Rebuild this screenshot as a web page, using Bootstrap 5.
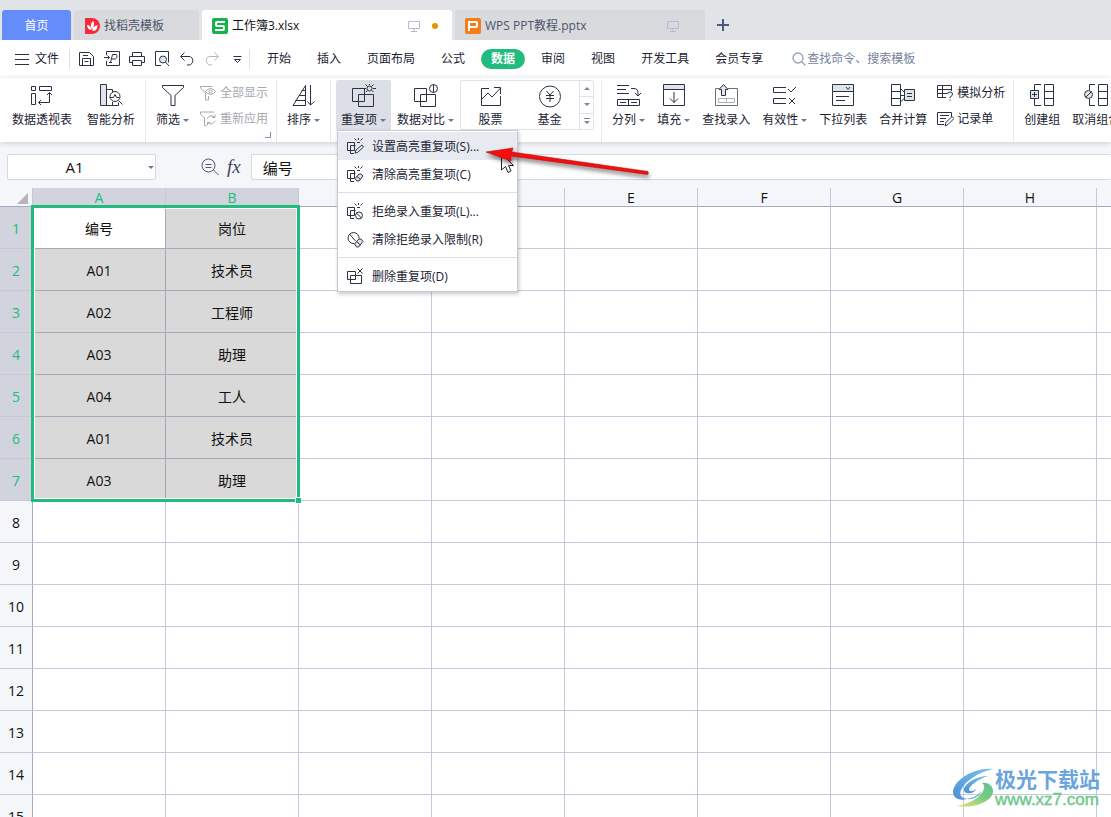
<!DOCTYPE html>
<html lang="zh-CN">
<head>
<meta charset="utf-8">
<meta name="viewport" content="width=device-width, initial-scale=1">
<title>工作簿3.xlsx</title>
<link href="https://cdn.jsdelivr.net/npm/bootstrap@5.3.0/dist/css/bootstrap.min.css" rel="stylesheet">
<style>
  :root { --ink:#2b3245; --green:#21bb7e; --chrome:#f5f6f9; --line:#c3c9dc; --head:#d1d4dc; --col:133px; --row:42px; }
  body { height:100vh; overflow:hidden; font-family:"Open Sans","Noto Sans CJK SC",sans-serif; font-size:12px; line-height:18px; color:#1c2333; background:#fff; }
  button { font:inherit; color:inherit; border:0; background:none; padding:0; }
  svg { display:block; flex:none; fill:none; stroke:var(--ink); stroke-width:1; }
  .tabs-bar { background:#e2e3e7; height:40px; padding:10px 2px 0; gap:3px; }
  .doc-tab { height:30px; border-radius:3px 3px 0 0; background:#d9dade; color:#4b5468; padding:2px 11px 0; }
  .doc-tab.home { width:69px; background:#648dfb; color:#fff; }
  .doc-tab.store { width:125px; }
  .doc-tab.file { width:250px; padding:2px 10px 0; }
  .doc-tab.current { background:#fff; color:#111; }
  .doc-tab svg { stroke:none; }
  .dot { width:6px; height:6px; border-radius:50%; background:#e69500; }
  .menu-row { height:38px; }
  .file-menu { padding:0 10px 0 15px; gap:6px; }
  .vr-line { width:1px; height:20px; background:#dfe1e6; flex:none; }
  .quick { gap:9px; padding:0 4px 0 9px; }
  .menu-row a { color:#1c2333; text-decoration:none; padding:0 13px; white-space:nowrap; }
  .menu-row a.on { background:var(--green); color:#fff; font-weight:700; border-radius:10px; padding:1px 10px; margin:0 3px; }
  .menu-row input { border:0; outline:0; width:150px; padding:0; color:#6e7a96; }
  .menu-row input::placeholder { color:#76819c; opacity:1; }
  .ribbon { height:64px; padding:2px 0 0 7px; box-shadow:0 1px 5px rgba(40,50,80,.22); position:relative; z-index:3; background:#fff; }
  .group { gap:2px; padding-right:5px; margin-right:5px; border-right:1px solid #e6e8ec; height:62px; flex:none; }
  .group.wide { gap:5px; }
  .group.tight { gap:1px; padding-right:7px; }
  .tool { height:50px; padding:4px 5px 2px; display:flex; flex-direction:column; align-items:center; gap:3px; white-space:nowrap; flex:none; }
  .tool.held { background:#dce0e6; border-radius:2px 2px 0 0; }
  .caret::after { content:""; display:inline-block; margin-left:3px; vertical-align:2px; border:3px solid transparent; border-top-color:#6d7894; border-bottom:0; }
  .pair { padding:4px 3px; gap:8px; position:relative; }
  .pair button { display:flex; align-items:center; gap:3px; white-space:nowrap; }
  .off { color:#a6a8ae; } .off svg { stroke:#a6a8ae; }
  .gallery { border:1px solid #dfe2e7; border-radius:2px; height:50px; width:134px; flex:none; }
  .gallery .tool { height:48px; padding:3px 0 2px; width:59px; }
  .steps { width:16px; border-left:1px solid #dfe2e7; }
  .steps button { flex:1; display:grid; place-items:center; }
  .steps button + button { border-top:1px solid #dfe2e7; }
  .popup { position:absolute; left:1px; top:50px; width:181px; background:#fff; border:1px solid #c6cad3; box-shadow:1px 2px 4px rgba(0,0,0,.22); z-index:5; padding:1px 0; }
  .popup .item { height:28px; width:100%; padding:1px 8px 0; gap:8px; display:flex; align-items:center; white-space:nowrap; }
  .popup .item.hot { background:#e7eaf0; }
  .popup hr { margin:4px 0; border:0; border-top:1px solid #dcdfe5; opacity:1; }
  .pointer { position:absolute; left:140px; top:8px; stroke:none; overflow:visible; }
  .formula { background:var(--chrome); height:46px; padding:12px 0 8px 7px; }
  .field { border:1px solid #d6d9e0; border-radius:2px; background:#fff; height:26px; outline:0; color:#111; }
  .namebox { width:149px; position:relative; margin-right:45px; }
  .namebox input { width:100%; text-align:center; font-size:15px; padding:0 14px 0 0; }
  .namebox button { position:absolute; right:2px; top:4px; }
  .fx { font:italic 19px/24px "Liberation Serif",serif; color:#3d475c; }
  .formula .entry { font-size:15px; padding:0 11px; margin-left:10px; min-width:0; }
  .sheet { flex:1 1 0; overflow:hidden; min-height:0; }
  .grid-cells { table-layout:fixed; width:1197px; border-collapse:separate; border-spacing:0; font-size:14px; text-align:center; color:#111; }
  .grid-cells th, .grid-cells td { border:solid var(--line); border-width:0 1px 1px 0; padding:2px 0 0; line-height:20px; font-weight:400; height:var(--row); }
  .grid-cells thead th { height:19px; line-height:16px; background:var(--chrome); border-bottom-color:#a3abc2; }
  .grid-cells tbody th { background:var(--chrome); border-right-color:#a3abc2; }
  .grid-cells thead th.sel, .grid-cells tbody th.sel { background:var(--head); color:var(--green); }
  .grid-cells td.pick { background:#d9d9d9; border-color:#a3a9ba; }
  .grid-cells td.active-cell { background:#fff; position:relative; }
  .marquee { position:absolute; left:-2px; top:-2px; width:calc(var(--col)*2 + 3px); height:calc(var(--row)*7 + 3px); border:3px solid var(--green); box-shadow:inset 0 0 0 1px #fff; }
  .marquee::after { content:""; position:absolute; right:-5px; bottom:-5px; width:7px; height:7px; background:var(--green); border:1px solid #fff; }
  .brand { position:absolute; right:11px; bottom:8px; gap:1px; z-index:2; }
  .brand svg { stroke:none; }
  .brand strong { font-size:21px; line-height:24px; color:#6aa5dc; }
  .brand span { font:17px/18px "Liberation Sans",sans-serif; -webkit-text-stroke:.4px #6dc98b; color:#6dc98b; }
</style>
</head>
<body class="d-flex flex-column position-relative">

<div class="tabs-bar d-flex flex-shrink-0">
  <button class="doc-tab home">首页</button>
  <button class="doc-tab store d-flex align-items-center gap-1">
    <svg width="15" height="16"><path fill="#f9293b" d="M0 0h7a8 8 0 0 1 0 16H0z"/><path fill="#fff" d="M6.500 12C3.500 12 2 9 2 7c2.500 0 4.500 2 4.500 5zM7 11C5 8 6 5 8 3c2 2 1 6-1 8zM7.500 13c0-4 2-5 5-6 0 3-1 6-5 6z"/></svg>
    找稻壳模板</button>
  <button class="doc-tab file current d-flex align-items-center gap-1">
    <svg width="16" height="16"><rect width="16" height="16" rx="2" fill="#18b14f"/><path fill="none" stroke="#fff" stroke-width="2" d="M13 4H5q-1 0-1 1v2q0 1 1 1h6q1 0 1 1v2q0 1-1 1H3"/></svg>
    工作簿3.xlsx
    <svg class="ms-auto me-2" width="12" height="12"><path stroke="#b3bbd0" d="M.5 1.500h11v7H.5zM6 8.500v3M3 11.500h6"/></svg>
    <span class="dot me-1"></span></button>
  <button class="doc-tab file d-flex align-items-center gap-1">
    <svg width="16" height="16"><rect width="16" height="16" rx="2" fill="#f67d16"/><path fill="none" stroke="#fff" stroke-width="2" d="M4 13V4h7q1 0 1 1v3q0 1-1 1H4"/></svg>
    WPS PPT教程.pptx
    <svg class="ms-auto me-3" width="12" height="12"><path stroke="#b3bbd0" d="M.5 1.500h11v7H.5zM6 8.500v3M3 11.500h6"/></svg></button>
  <button class="ms-2" aria-label="新建标签"><svg width="14" height="14"><path stroke="#4c5b7d" stroke-width="2" d="M7 1v12M1 7h12"/></svg></button>
</div>

<div class="menu-row d-flex align-items-center flex-shrink-0">
  <button class="file-menu d-flex align-items-center"><svg width="14" height="12"><path d="M0 1.500h14M0 6.500h14M0 11.500h14"/></svg>文件</button>
  <span class="vr-line"></span>
  <div class="quick d-flex align-items-center">
    <button aria-label="保存"><svg width="16" height="16"><path d="M.5 14.500v-13h10l4 4v9zM3.500 14.500v-7h8v7M5.500 10.500h4M4 4.500h5"/></svg></button>
    <button aria-label="输出为PDF"><svg width="16" height="16"><path d="M2.500 4V.5h13v14h-13V10M0 6.500h5.500M3.500 4.500l2 2-2 2M6.500 11.500l2-8h3.500c2 0 1 4.500-1 4.500H8M5 11.500h3"/></svg></button>
    <button aria-label="打印"><svg width="16" height="16"><path d="M3.500 5V1.500h9V5M3 11.500H.5v-6h15v6H13M3.500 9.500h9v5h-9z"/></svg></button>
    <button aria-label="打印预览"><svg width="16" height="16"><path d="M7 14.500H1.500v-14h13v11"/><circle cx="9" cy="8.500" r="3.500" fill="#e0e6ef"/><path d="M11.500 11l3.500 4"/></svg></button>
    <button aria-label="撤销"><svg width="16" height="16"><path d="M5.500 1.500l-4 4 4 4M2 5.500h8c5 0 5 8 0 8.500H8" /></svg></button>
    <button aria-label="恢复"><svg width="16" height="16"><path stroke="#b2b5bb" d="M10.500 1.500l4 4-4 4M14 5.500H6c-5 0-5 8 0 8.500h2"/></svg></button>
    <button aria-label="更多"><svg width="16" height="16"><path d="M4.500 5.500h8M5.500 8.500l3 3 3-3z"/></svg></button>
  </div>
  <span class="vr-line"></span>
  <nav class="d-flex align-items-center ms-1">
    <a href="#">开始</a><a href="#">插入</a><a href="#">页面布局</a><a href="#">公式</a><a href="#" class="on">数据</a><a href="#">审阅</a><a href="#">视图</a><a href="#">开发工具</a><a href="#">会员专享</a>
  </nav>
  <label class="d-flex align-items-center ms-3"><svg width="15" height="16"><g stroke="#98a2ba" stroke-width="1.300"><circle cx="6" cy="7" r="5"/><path d="M9.500 10.500l4 4"/></g></svg><input type="text" placeholder="查找命令、搜索模板" aria-label="查找命令"></label>
</div>

<div class="ribbon d-flex flex-shrink-0">
  <div class="group wide d-flex">
    <button class="tool"><svg width="24" height="24"><path d="M1.500 2.500h4v4h-4zM9.500 2.500h12v4h-12zM1.500 9.500h4v11h-4zM8.500 18.500h11v-10M11 16l-2.500 2.500L11 21M17 11l2.500-2.500L22 11"/></svg>数据透视表</button>
    <button class="tool"><svg width="24" height="24"><path fill="#dfe4ea" d="M1.500 .5h6v21h-6z"/><path d="M7.500 5.500h6v3M7.500 21.500h12v-3M13.500 21v-3"/><circle cx="16" cy="12.500" r="5"/><path d="M10.500 13.500h4l1.500-3 1.500 3h3M19.500 16.500l4 4"/></svg>智能分析</button>
  </div>
  <div class="group d-flex">
    <button class="tool"><svg width="24" height="24"><path d="M1.500 1.500h21v2l-8.500 8v10h-4v-10l-8.500-8z"/></svg><span class="caret">筛选</span></button>
    <div class="pair d-flex flex-column off">
      <button disabled class="off"><svg width="18" height="18"><path d="M13 3V2.500H1.500V4l5 5v7h3v-4"/><path d="M6.500 7.500q5-6 10 0-5 6-10 0z"/><circle cx="11.500" cy="7.500" r="1.500"/></svg>全部显示</button>
      <button disabled class="off"><svg width="18" height="18"><path d="M15 2.500V2H1.500v2l4 4v7.500h2"/><path d="M8 8.500q4-5 8-1V4.500M16 10.500q-3 6-7.500 2V15M13 7.500h3M8.500 12.500h3"/></svg>重新应用</button>
      <svg width="6" height="6" class="position-absolute end-0 bottom-0 mb-1"><path stroke="#8791a9" d="M5.500 0v5.500H0"/></svg>
    </div>
  </div>
  <div class="group d-flex">
    <button class="tool"><svg width="24" height="24"><path d="M1 21.500h12.500V1.500zM3.500 16.500h10M7 11.500h6.500M9.500 6.500h4M18.500 1v20M15.500 17.500l3 3.500 4-3.500"/></svg><span class="caret">排序</span></button>
  </div>
  <div class="group tight d-flex">
    <div class="position-relative">
      <button class="tool held"><svg width="26" height="24"><path d="M1.500 4.500h12v13h-12zM7.500 10.500h15v12h-15z"/><circle cx="18.500" cy="4.500" r="2.500"/><path d="M18.500 0v1M13 4.500h2M22 4.500h3M14.500 .5l2 2M22.500 .5l-2 2M15 8l1.500-1.500M22.500 8L21 6.500"/></svg><span class="caret">重复项</span></button>
      <div class="popup" role="menu">
        <button class="item hot"><svg width="18" height="18"><path d="M1.500 4.500h7v8h-7zM4.500 15.500v-8h5M4.500 15.500H8M9 15l1-3 6-5 1.500 2-6 5.500zM12.500 0v2M8.500 .5l2 2M16.500 .5l-2 2M11 4.500h3"/></svg>设置高亮重复项(S)...</button>
        <button class="item"><svg width="18" height="18"><path d="M1.500 4.500h7v8h-7zM4.500 15.500v-8h5M4.500 15.500H8M12.500 0v2M8.500 .5l2 2M16.500 .5l-2 2M11 4.500h3"/><path fill="#dfe4ea" d="M9 12.500l4-4.500h2l2 2-4 5h-2z"/><path d="M11 10.500l3.500 3"/></svg>清除高亮重复项(C)</button>
        <hr>
        <button class="item"><svg width="18" height="18"><path d="M1.500 4.500h7v8h-7zM4.500 15.500v-8h5M4.500 15.500H8M12.500 0v2M8.500 .5l2 2M16.500 .5l-2 2M11 4.500h3"/><circle cx="13" cy="12.500" r="3.500"/><path d="M10.500 10l5 5"/></svg>拒绝录入重复项(L)...</button>
        <button class="item"><svg width="18" height="18"><path d="M8 12.500a5.500 5.500 0 1 1 5-5M3.500 3l6 7"/><path fill="#dfe4ea" d="M8.500 13l4.500-5h2l2 2.500-4.500 5.500h-2z"/><path d="M10.500 10.500l4 3.500"/></svg>清除拒绝录入限制(R)</button>
        <hr>
        <button class="item"><svg width="18" height="18"><path d="M9.500 7V3.500h-8v8h3M9.500 7v4.500h-5M4.500 11.500v4h11v-8H4.500v4M11.500 .5l5 5M16.500 .5l-5 5"/></svg>删除重复项(D)</button>
        <svg class="pointer" width="180" height="40" aria-hidden="true">
          <defs><filter id="drop" x="-10%" y="-30%" width="120%" height="180%"><feDropShadow dx="1" dy="3" stdDeviation="2" flood-opacity=".5"/></filter></defs>
          <path fill="#fff" stroke="#222" d="M23.500 15v16l4-3.500 2.500 6 3-1.500-2.500-5.500h5z"/>
          <path filter="url(#drop)" fill="#f60a0a" stroke="#a81414" stroke-width=".6" d="M8 13l27-4-1.500 4L170 32.500q1 3-1 3L33 17l0 5z"/>
        </svg>
      </div>
    </div>
    <button class="tool"><svg width="26" height="24"><path d="M1.500 4.500h12v13h-12zM7.500 10.500h15v12h-15z"/><circle cx="20.500" cy="4.500" r="4"/><path d="M20.500 .5v8"/></svg><span class="caret">数据对比</span></button>
    <div class="gallery d-flex">
      <button class="tool"><svg width="24" height="24"><path d="M10 4.500H2.500v17h19V12M3 15l6-6 4 4 8.500-9M15 3.500h6.500V10"/></svg>股票</button>
      <button class="tool"><svg width="24" height="24"><circle cx="12" cy="12.500" r="10.500"/><path d="M8.500 7l3.500 4 3.500-4M12 11v7M8 11.500h8M8 14.500h8"/></svg>基金</button>
      <div class="steps d-flex flex-column">
        <button aria-label="上"><svg width="6" height="3"><path fill="#7883a0" stroke="none" d="M0 3h6L3 0z"/></svg></button>
        <button aria-label="下"><svg width="6" height="3"><path fill="#7883a0" stroke="none" d="M0 0h6L3 3z"/></svg></button>
        <button aria-label="展开"><svg width="6" height="6"><path fill="#7883a0" stroke="none" d="M0 0h6v1H0zM0 3h6L3 6z"/></svg></button>
      </div>
    </div>
  </div>
  <div class="group d-flex">
    <button class="tool"><svg width="24" height="24"><path d="M0 1.500h12M0 5.500h9M0 9.500h12M14 4.500h3q4 0 4 5v2M18 9l3 3 3-3M.5 15.500h22v6H.5zM11.500 15.500v6M3 18.500h6M14 18.500h6"/></svg><span class="caret">分列</span></button>
    <button class="tool"><svg width="24" height="24"><path fill="#dfe4ea" d="M1.500 .5h21v5h-21z"/><path d="M1.500 5.500v16h21v-16M12 8v10.500M8 14.500l4 4 4-4"/></svg><span class="caret">填充</span></button>
    <button class="tool"><svg width="24" height="24"><path stroke="#687080" d="M5 4.500H1.500v17h22v-17H14"/><path stroke="#aab0ba" d="M4.500 14.500h16v4h-16zM12.500 14.500v4"/><path fill="#dfe4ea" d="M9.500 .5l4.500 5h-2.500v6h-4v-6H5z"/></svg>查找录入</button>
    <button class="tool"><svg width="24" height="24"><path d="M13 3.500H.5v5H13M13 14.500H.5v5H13M15 5l3 3 5-5M16 14l6 6M22 14l-6 6"/></svg><span class="caret">有效性</span></button>
    <button class="tool"><svg width="24" height="24"><path fill="#dfe4ea" d="M1.500 .5h21v7h-21z"/><path d="M1.500 7.500v14h21v-14M15 3l2 2.500 2-2.500M5 12.500h13M5 16.500h9"/></svg>下拉列表</button>
    <button class="tool"><svg width="24" height="24"><path d="M.5 .5h9v21h-9zM.5 7.500h9M.5 14.500h9M9.500 4.500l4 4M9.500 11.500h4M9.500 18l4-4"/><path fill="#dfe4ea" d="M13.500 5.500h10v11h-10z"/><path d="M16 9.500h5M16 12.500h5"/></svg>合并计算</button>
    <div class="pair d-flex flex-column">
      <button><svg width="17" height="18"><path d="M9 13.500H.5v-12h14V7M.5 5.500h14M.5 9.500H10M5.500 1.500v12M10.500 10q0-2 2.500-2t2.500 2-2.500 3v1M13 15.500v1"/></svg>模拟分析</button>
      <button><svg width="17" height="18"><path d="M7 14.500H.5v-12h14V7M3 5.500h9M3 8.500h6M3 11.500h4M8 16l1-3.500 6-6 2 2-6 6z"/></svg>记录单</button>
    </div>
  </div>
  <div class="group d-flex">
    <button class="tool"><svg width="24" height="24"><path d="M11 .5H4.500V6M4.500 15v6.500H11M14.500 .5h9v21h-9zM14.500 7.500h9M14.500 14.500h9"/><path fill="#dfe4ea" d="M.5 6.500h8v8h-8z"/><path d="M2 10.500h5M4.500 8v5"/></svg>创建组</button>
    <button class="tool"><svg width="24" height="24"><path d="M11 .5H5.500V6M5.500 15v6.500H11M14.500 .5h9v21h-9zM14.500 7.500h9M14.500 14.500h9"/><circle cx="4.500" cy="10.500" r="4" fill="#dfe4ea"/><path d="M2 13l5-5"/></svg>取消组合</button>
  </div>
</div>

<div class="formula d-flex align-items-center flex-shrink-0">
  <div class="namebox"><input class="field" type="text" value="A1" aria-label="名称框"><button class="caret" aria-label="名称列表"></button></div>
  <button aria-label="查找"><svg width="18" height="18"><g stroke="#4e5970"><circle cx="7.500" cy="7.500" r="6.500"/><path d="M4.500 6.500h6M4.500 9.500h6M12.500 12l5 5"/></g></svg></button>
  <button class="fx ms-2" aria-label="插入函数">fx</button>
  <input class="field entry flex-grow-1 border-end-0" type="text" value="编号" aria-label="编辑栏">
</div>

<main class="sheet">
  <table class="grid-cells">
    <colgroup><col style="width:33px"><col span="8" style="width:133px"><col></colgroup>
    <thead><tr>
      <th><svg class="ms-auto me-1" width="11" height="11"><path fill="#b4b6ba" stroke="none" d="M11 0v11H0z"/></svg></th>
      <th class="sel" scope="col">A</th><th class="sel" scope="col">B</th><th scope="col">C</th><th scope="col">D</th><th scope="col">E</th><th scope="col">F</th><th scope="col">G</th><th scope="col">H</th><th scope="col"></th>
    </tr></thead>
    <tbody id="rows"></tbody>
  </table>
</main>

<div class="brand d-flex align-items-center">
  <svg width="42" height="42" viewBox="0 0 42 42">
    <defs><linearGradient id="g1" x1="0" y1="1" x2="1" y2="0"><stop offset="0" stop-color="#4d8fd6"/><stop offset="1" stop-color="#7cc4ef"/></linearGradient><linearGradient id="g2" x1="0" y1="1" x2="1" y2="0"><stop offset="0" stop-color="#e8e370"/><stop offset=".6" stop-color="#74cb84"/><stop offset="1" stop-color="#61c294"/></linearGradient></defs>
    <path fill="url(#g1)" d="M41 2C22 0 2 13 1 25c0 7 8 9 14 7-6-1-8-4-6-9C13 14 27 5 41 2z"/>
    <path fill="url(#g1)" d="M36 9C24 9 12 17 12 23c0 5 11 4 12-1-2 2-6 3-7 1 0-4 9-11 19-14z"/>
    <path fill="url(#g2)" d="M4 39c16 3 37-4 37-15 0-6-6-9-11-8 3 2 3 6-1 11-5 6-15 11-25 12z"/>
    <path fill="#6cb3e3" d="M14 32c7 1 15-3 15-8-3 5-9 7-15 8z"/>
  </svg>
  <div class="d-flex flex-column"><strong>极光下载站</strong><span>www.xz7.com</span></div>
</div>

<script src="https://cdn.jsdelivr.net/npm/bootstrap@5.3.0/dist/js/bootstrap.bundle.min.js"></script>
<script>
  const data = [["编号","岗位"],["A01","技术员"],["A02","工程师"],["A03","助理"],["A04","工人"],["A01","技术员"],["A03","助理"]];
  let html = "";
  for (let r = 0; r < 15; r++) {
    const d = data[r];
    html += `<tr><th scope="row"${d ? ' class="sel"' : ""}>${r + 1}</th>`;
    for (let c = 0; c < 9; c++) {
      const cls = d && c < 2 ? (r + c === 0 ? "pick active-cell" : "pick") : "";
      html += `<td class="${cls}">${d && d[c] ? d[c] : ""}${r + c === 0 ? '<span class="marquee"></span>' : ""}</td>`;
    }
    html += "</tr>";
  }
  document.getElementById("rows").innerHTML = html;
</script>
</body>
</html>
